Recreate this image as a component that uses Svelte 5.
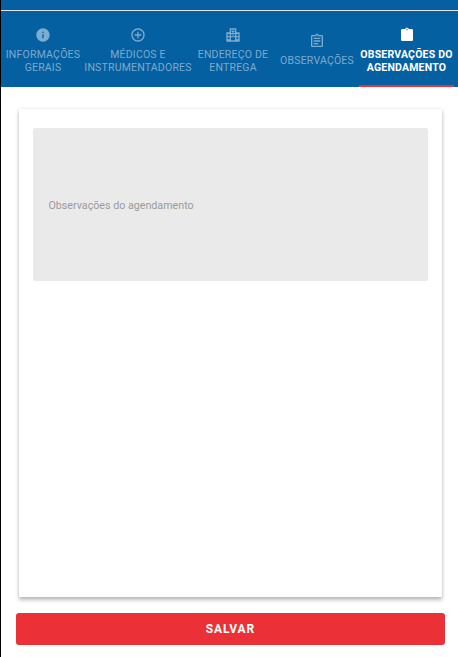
<script>
	const tabs = [
		{ id: 'info', label: 'INFORMAÇÕES GERAIS' },
		{ id: 'medicos', label: 'MÉDICOS E INSTRUMENTADORES' },
		{ id: 'endereco', label: 'ENDEREÇO DE ENTREGA' },
		{ id: 'obs', label: 'OBSERVAÇÕES' },
		{ id: 'agenda', label: 'OBSERVAÇÕES DO AGENDAMENTO', active: true }
	];
</script>

<div class="page">
	<header>
		<div class="topline"></div>
		<nav>
			{#each tabs as tab}
				<button type="button" class="tab" class:active={tab.active}>
					<svg viewBox="0 0 24 24" aria-hidden="true">
						{#if tab.id === 'info'}
							<path fill="currentColor" d="M12 2C6.480 2 2 6.480 2 12s4.480 10 10 10 10-4.480 10-10S17.520 2 12 2zm1 15h-2v-6h2v6zm0-8h-2V7h2v2z" />
						{:else if tab.id === 'medicos'}
							<path fill="currentColor" d="M13 7h-2v4H7v2h4v4h2v-4h4v-2h-4V7zm-1-5C6.480 2 2 6.480 2 12s4.480 10 10 10 10-4.480 10-10S17.520 2 12 2zm0 18c-4.410 0-8-3.590-8-8s3.590-8 8-8 8 3.590 8 8-3.590 8-8 8z" />
						{:else if tab.id === 'endereco'}
							<path fill="currentColor" fill-rule="evenodd" d="M7 2h10v6h5v14H2V8h5zm2 2v5h6V4zm2 .8h2v1.200h1.200v1.600H13v1h-2v-1H9.800V6H11zM4 10.500v3h3v-3zm0 5v3h3v-3zm13-5v3h3v-3zm0 5v3h3v-3zm-8-4.500v3h2.500v-3zm3.500 0v3H15v-3zM9 15.500V20h6v-4.500z" />
						{:else if tab.id === 'obs'}
							<path fill="currentColor" d="M19 3h-4.180C14.400 1.840 13.300 1 12 1s-2.400.840-2.820 2H5c-1.100 0-2 .900-2 2v14c0 1.100.900 2 2 2h14c1.100 0 2-.900 2-2V5c0-1.100-.900-2-2-2zm-7 0c.550 0 1 .450 1 1s-.450 1-1 1-1-.450-1-1 .450-1 1-1zm7 16H5V5h14v14zM7 15h7v2H7zm0-4h10v2H7zm0-4h10v2H7z" />
						{:else}
							<path fill="currentColor" d="M19 3h-4.180C14.400 1.840 13.300 1 12 1s-2.400.840-2.820 2H5c-1.100 0-2 .900-2 2v14c0 1.100.900 2 2 2h14c1.100 0 2-.900 2-2V5c0-1.100-.900-2-2-2zm-7 0c.550 0 1 .450 1 1s-.450 1-1 1-1-.450-1-1 .450-1 1-1z" />
						{/if}
					</svg>
					<span>{tab.label}</span>
				</button>
			{/each}
		</nav>
	</header>

	<main>
		<section class="card">
			<div class="field">Observações do agendamento</div>
		</section>
		<button type="button" class="save">SALVAR</button>
	</main>
</div>

<style>
	:global(body) {
		margin: 0;
		background: #fff;
		font-family: Roboto, 'Liberation Sans', sans-serif;
	}

	.page {
		height: 657px;
		display: flex;
		flex-direction: column;
		border-left: 1px solid #000;
		box-sizing: border-box;
		overflow: hidden;
	}

	header {
		height: 87px;
		padding-top: 10px;
		box-sizing: border-box;
		background: #0560a2;
		flex-shrink: 0;
	}

	.topline {
		height: 1px;
		background: #e6e2df;
	}

	nav {
		display: grid;
		grid-template-columns: 84px 106px 84px 84px 95px;
		height: 76px;
	}

	.tab {
		border: 0;
		background: none;
		padding: 3px 0 0;
		height: 76px;
		display: flex;
		flex-direction: column;
		align-items: center;
		justify-content: center;
		gap: 6px;
		color: rgba(255, 255, 255, 0.48);
		font: 400 10.500px/12.500px Roboto, 'Liberation Sans', sans-serif;
		letter-spacing: 0.2px;
		text-align: center;
	}

	.tab svg {
		width: 16px;
		height: 16px;
	}

	.tab.active {
		color: #fff;
		font-weight: 700;
		box-shadow: inset 0 -2px 0 #ee3039;
	}

	main {
		flex: 1;
		display: flex;
		flex-direction: column;
		padding: 22px 13px 12px 15px;
		gap: 16px;
		min-height: 0;
	}

	.card {
		flex: 1;
		margin: 0 3px;
		padding: 19px 14px;
		background: #fff;
		box-shadow: 0 3px 4px rgba(0, 0, 0, 0.26), 0 0 3px rgba(0, 0, 0, 0.1);
	}

	.field {
		height: 153px;
		display: flex;
		align-items: center;
		padding: 2px 0 0 15.500px;
		box-sizing: border-box;
		background: #eaeaea;
		border-radius: 2px;
		color: #9a9a9a;
		font-size: 10.700px;
	}

	.save {
		height: 32px;
		flex-shrink: 0;
		border: 0;
		border-radius: 3px;
		background: #ec3038;
		color: #fff;
		font: 700 12px Roboto, 'Liberation Sans', sans-serif;
		letter-spacing: 0.9px;
	}
</style>
